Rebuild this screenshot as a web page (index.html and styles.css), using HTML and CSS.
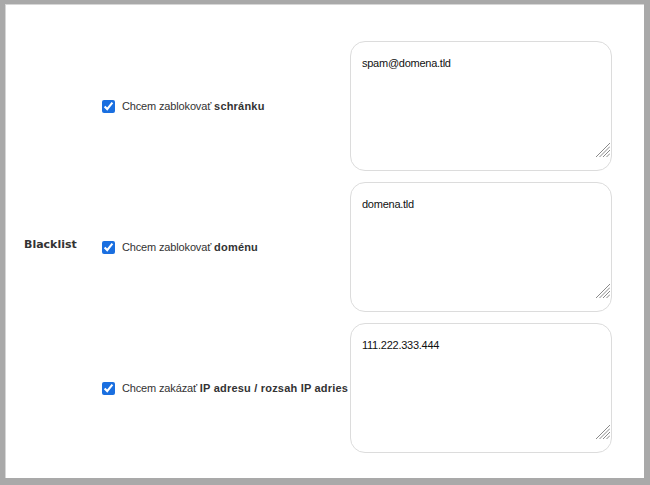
FILE: index.html
```html
<!DOCTYPE html>
<html lang="en">
<head>
    <meta charset="UTF-8">
    <title>Blacklist</title>
    <link rel="stylesheet" href="styles.css">
</head>
<body>
    <div class="frame">
        <div class="blacklist">
            <div class="section-label">Blacklist</div>

            <label class="option row1">
                <input type="checkbox" checked>
                <span>Chcem zablokovať <b>schránku</b></span>
            </label>
            <div class="entry row1">
                <textarea>spam@domena.tld</textarea>
                <svg class="grip" width="14" height="15" viewBox="0 0 14 15"><path d="M0 15L14 1M3.5 15L14 4.5M7 15L14 8M10.5 15L14 11.5"/></svg>
            </div>

            <label class="option row2">
                <input type="checkbox" checked>
                <span>Chcem zablokovať <b>doménu</b></span>
            </label>
            <div class="entry row2">
                <textarea>domena.tld</textarea>
                <svg class="grip" width="14" height="15" viewBox="0 0 14 15"><path d="M0 15L14 1M3.5 15L14 4.5M7 15L14 8M10.5 15L14 11.5"/></svg>
            </div>

            <label class="option row3">
                <input type="checkbox" checked>
                <span>Chcem zakázať <b>IP adresu / rozsah IP adries</b></span>
            </label>
            <div class="entry row3">
                <textarea>111.222.333.444</textarea>
                <svg class="grip" width="14" height="15" viewBox="0 0 14 15"><path d="M0 15L14 1M3.5 15L14 4.5M7 15L14 8M10.5 15L14 11.5"/></svg>
            </div>
        </div>
    </div>
</body>
</html>
```

FILE: styles.css
```css
/* Page frame */
body {
    margin: 0;
    background-color: #a9a9a9;
    font-family: 'Liberation Sans', Arial, sans-serif;
    color: #222;
}

.frame {
    margin: 4px 6px 6px 5px;
    height: 474px;
    background-color: #fff;
    border-top: 1px solid #d6d6d6;
    border-left: 1px solid #d6d6d6;
    box-sizing: border-box;
    padding: 36px 0 0 18px;
}

/* Blacklist grid */
.blacklist {
    display: grid;
    grid-template-columns: 74px 252px 262px;
    grid-template-rows: 130px 130px 130px;
    row-gap: 11px;
}

.section-label {
    grid-column: 1;
    grid-row: 1 / 4;
    align-self: center;
    padding-bottom: 6px;
    font-family: 'DejaVu Sans', Verdana, sans-serif;
    font-weight: bold;
    font-size: 11px;
    color: #333;
}

.row1 { grid-row: 1; }
.row2 { grid-row: 2; }
.row3 { grid-row: 3; }

.option {
    grid-column: 2;
    display: flex;
    align-items: center;
    white-space: nowrap;
    font-size: 11px;
    letter-spacing: -0.15px;
    color: #333;
}

.option input {
    width: 13px;
    height: 13px;
    margin: 0 7px 0 4px;
    accent-color: #1a6fe0;
}

.option b {
    color: #333;
    letter-spacing: 0.2px;
}

/* Textareas */
.entry {
    grid-column: 3;
    position: relative;
}

.entry textarea {
    display: block;
    width: 100%;
    height: 130px;
    box-sizing: border-box;
    border: 1px solid #dcdcdc;
    border-radius: 15px;
    padding: 15px 11px;
    font-family: 'Liberation Sans', Arial, sans-serif;
    font-size: 11px;
    letter-spacing: -0.25px;
    color: #111;
    outline: none;
    resize: none;
}

.grip {
    position: absolute;
    right: 2px;
    bottom: 14px;
    stroke: #8a8a8a;
    stroke-width: 1;
    fill: none;
}
```
